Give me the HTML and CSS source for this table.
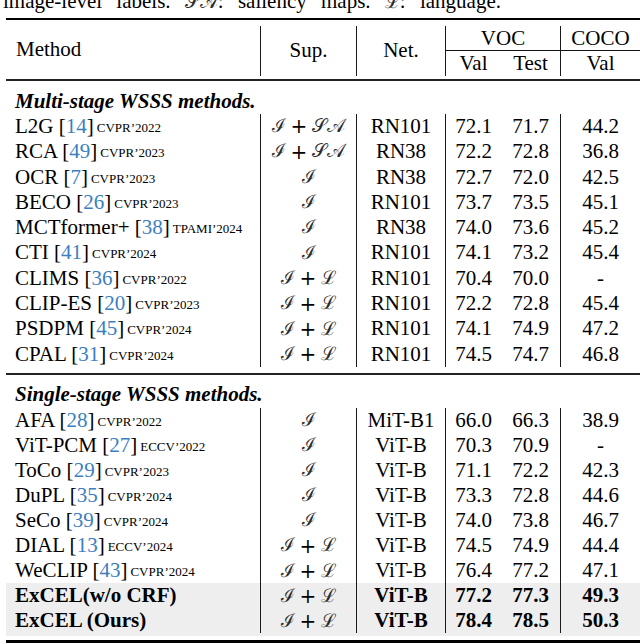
FILE: index.html
```html
<!DOCTYPE html>
<html>
<head>
<meta charset="utf-8">
<link rel="stylesheet" href="styles.css">
</head>
<body>
<div class="page">
  <div class="caption"><p>image-level labels. <span class="m">𝒮𝒜</span>: saliency maps. <span class="m">ℒ</span>: language.</p></div>
  <div class="tbl">
    <div class="rule heavy"></div>
    <div class="gap g-top"></div>
    <div class="head">
      <div class="h h-method">Method</div>
      <div class="h h-sup vl">Sup.</div>
      <div class="h h-net vl">Net.</div>
      <div class="h h-voc vl cm">VOC</div>
      <div class="h h-coco vl cm">COCO</div>
      <div class="h h-val vl">Val</div>
      <div class="h h-test">Test</div>
      <div class="h h-cval vl">Val</div>
    </div>
    <div class="gap g-headbot"></div>
    <div class="rule mid"></div>
    <div class="gap g-sec1"></div>
    <div class="section">Multi-stage WSSS methods.</div>

    <div class="row"><div class="c c1">L2G [<span class="cite">14</span>] <span class="ven">CVPR’2022</span></div><div class="c vl"><span class="m">ℐ</span><span class="plus">+</span><span class="m">𝒮𝒜</span></div><div class="c vl">RN101</div><div class="c vl">72.1</div><div class="c">71.7</div><div class="c vl">44.2</div></div>
    <div class="row"><div class="c c1">RCA [<span class="cite">49</span>] <span class="ven">CVPR’2023</span></div><div class="c vl"><span class="m">ℐ</span><span class="plus">+</span><span class="m">𝒮𝒜</span></div><div class="c vl">RN38</div><div class="c vl">72.2</div><div class="c">72.8</div><div class="c vl">36.8</div></div>
    <div class="row"><div class="c c1">OCR [<span class="cite">7</span>] <span class="ven">CVPR’2023</span></div><div class="c vl"><span class="m">ℐ</span></div><div class="c vl">RN38</div><div class="c vl">72.7</div><div class="c">72.0</div><div class="c vl">42.5</div></div>
    <div class="row"><div class="c c1">BECO [<span class="cite">26</span>] <span class="ven">CVPR’2023</span></div><div class="c vl"><span class="m">ℐ</span></div><div class="c vl">RN101</div><div class="c vl">73.7</div><div class="c">73.5</div><div class="c vl">45.1</div></div>
    <div class="row"><div class="c c1">MCTformer+ [<span class="cite">38</span>] <span class="ven">TPAMI’2024</span></div><div class="c vl"><span class="m">ℐ</span></div><div class="c vl">RN38</div><div class="c vl">74.0</div><div class="c">73.6</div><div class="c vl">45.2</div></div>
    <div class="row"><div class="c c1">CTI [<span class="cite">41</span>] <span class="ven">CVPR’2024</span></div><div class="c vl"><span class="m">ℐ</span></div><div class="c vl">RN101</div><div class="c vl">74.1</div><div class="c">73.2</div><div class="c vl">45.4</div></div>
    <div class="row"><div class="c c1">CLIMS [<span class="cite">36</span>] <span class="ven">CVPR’2022</span></div><div class="c vl"><span class="m">ℐ</span><span class="plus">+</span><span class="m">ℒ</span></div><div class="c vl">RN101</div><div class="c vl">70.4</div><div class="c">70.0</div><div class="c vl">-</div></div>
    <div class="row"><div class="c c1">CLIP-ES [<span class="cite">20</span>] <span class="ven">CVPR’2023</span></div><div class="c vl"><span class="m">ℐ</span><span class="plus">+</span><span class="m">ℒ</span></div><div class="c vl">RN101</div><div class="c vl">72.2</div><div class="c">72.8</div><div class="c vl">45.4</div></div>
    <div class="row"><div class="c c1">PSDPM [<span class="cite">45</span>] <span class="ven">CVPR’2024</span></div><div class="c vl"><span class="m">ℐ</span><span class="plus">+</span><span class="m">ℒ</span></div><div class="c vl">RN101</div><div class="c vl">74.1</div><div class="c">74.9</div><div class="c vl">47.2</div></div>
    <div class="row"><div class="c c1">CPAL [<span class="cite">31</span>] <span class="ven">CVPR’2024</span></div><div class="c vl"><span class="m">ℐ</span><span class="plus">+</span><span class="m">ℒ</span></div><div class="c vl">RN101</div><div class="c vl">74.5</div><div class="c">74.7</div><div class="c vl">46.8</div></div>

    <div class="gap g-sec-end"></div>
    <div class="rule mid"></div>
    <div class="gap g-sec2"></div>
    <div class="section">Single-stage WSSS methods.</div>

    <div class="row r2"><div class="c c1">AFA [<span class="cite">28</span>] <span class="ven">CVPR’2022</span></div><div class="c vl"><span class="m">ℐ</span></div><div class="c vl">MiT-B1</div><div class="c vl">66.0</div><div class="c">66.3</div><div class="c vl">38.9</div></div>
    <div class="row r2"><div class="c c1">ViT-PCM [<span class="cite">27</span>] <span class="ven">ECCV’2022</span></div><div class="c vl"><span class="m">ℐ</span></div><div class="c vl">ViT-B</div><div class="c vl">70.3</div><div class="c">70.9</div><div class="c vl">-</div></div>
    <div class="row r2"><div class="c c1">ToCo [<span class="cite">29</span>] <span class="ven">CVPR’2023</span></div><div class="c vl"><span class="m">ℐ</span></div><div class="c vl">ViT-B</div><div class="c vl">71.1</div><div class="c">72.2</div><div class="c vl">42.3</div></div>
    <div class="row r2"><div class="c c1">DuPL [<span class="cite">35</span>] <span class="ven">CVPR’2024</span></div><div class="c vl"><span class="m">ℐ</span></div><div class="c vl">ViT-B</div><div class="c vl">73.3</div><div class="c">72.8</div><div class="c vl">44.6</div></div>
    <div class="row r2"><div class="c c1">SeCo [<span class="cite">39</span>] <span class="ven">CVPR’2024</span></div><div class="c vl"><span class="m">ℐ</span></div><div class="c vl">ViT-B</div><div class="c vl">74.0</div><div class="c">73.8</div><div class="c vl">46.7</div></div>
    <div class="row r2"><div class="c c1">DIAL [<span class="cite">13</span>] <span class="ven">ECCV’2024</span></div><div class="c vl"><span class="m">ℐ</span><span class="plus">+</span><span class="m">ℒ</span></div><div class="c vl">ViT-B</div><div class="c vl">74.5</div><div class="c">74.9</div><div class="c vl">44.4</div></div>
    <div class="row r2"><div class="c c1">WeCLIP [<span class="cite">43</span>] <span class="ven">CVPR’2024</span></div><div class="c vl"><span class="m">ℐ</span><span class="plus">+</span><span class="m">ℒ</span></div><div class="c vl">ViT-B</div><div class="c vl">76.4</div><div class="c">77.2</div><div class="c vl">47.1</div></div>
    <div class="row r2 ours"><div class="c c1 b">ExCEL(w/o CRF)</div><div class="c vl"><span class="m">ℐ</span><span class="plus">+</span><span class="m">ℒ</span></div><div class="c vl b">ViT-B</div><div class="c vl b">77.2</div><div class="c b">77.3</div><div class="c vl b">49.3</div></div>
    <div class="row r2 ours"><div class="c c1 b">ExCEL (Ours)</div><div class="c vl"><span class="m">ℐ</span><span class="plus">+</span><span class="m">ℒ</span></div><div class="c vl b">ViT-B</div><div class="c vl b">78.4</div><div class="c b">78.5</div><div class="c vl b">50.3</div></div>
    <div class="ours-tail"></div>
    <div class="gap g-bot"></div>
    <div class="rule heavy bottom"></div>
  </div>
</div>
</body>
</html>
```

FILE: styles.css
```css
html, body {
  margin: 0;
  padding: 0;
  background: #ffffff;
}

body {
  font-family: "Liberation Serif", "Times New Roman", serif;
  color: #000;
  font-size: 21px;
}

.page {
  width: 640px;
  height: 644px;
  overflow: hidden;
}

.caption {
  display: flow-root;
  height: 18px;
}

.caption p {
  margin: -9px 0 0 3px;
  line-height: 21px;
  font-size: 21px;
  white-space: nowrap;
  word-spacing: 9px;
}

.m {
  font-family: "Liberation Serif", serif;
  font-style: normal;
  font-weight: normal;
  font-size: 18.5px;
  word-spacing: 0;
  color: #2b2b2b;
}

.plus {
  font-family: "DejaVu Serif", serif;
  font-weight: normal;
  font-size: 20px;
  margin: 0 5px;
}

.tbl {
  margin-left: 6px;
  width: 634px;
}

.rule { background: #000; }
.rule.heavy { height: 2px; }
.rule.mid { height: 2px; background: #222; }
.rule.bottom { height: 3px; }

.g-top { height: 6px; }
.g-headbot { height: 3px; }
.g-sec1 { height: 7.5px; }
.g-sec-end { height: 6.2px; }
.g-sec2 { height: 7.4px; }
.g-bot { height: 4px; }

.head {
  display: grid;
  grid-template-columns: 254px 96px 89px 56px 59px 80px;
  grid-template-rows: 25px 25px;
}

.h {
  display: flex;
  align-items: center;
  justify-content: center;
  line-height: 1;
}

.h-method { grid-column: 1; grid-row: 1 / span 2; justify-content: flex-start; padding-left: 10px; padding-bottom: 4px; }
.h-sup { grid-column: 2; grid-row: 1 / span 2; padding-bottom: 2px; }
.h-net { grid-column: 3; grid-row: 1 / span 2; padding-bottom: 2px; }
.h-voc { grid-column: 4 / span 2; grid-row: 1; padding-top: 1px; }
.h-coco { grid-column: 6; grid-row: 1; padding-top: 1px; }
.h-val { grid-column: 4; grid-row: 2; }
.h-test { grid-column: 5; grid-row: 2; }
.h-cval { grid-column: 6; grid-row: 2; }

.cm { border-bottom: 1px solid #111; }

.vl { border-left: 1px solid #1a1a1a; }

.section {
  height: 25.3px;
  display: flex;
  align-items: center;
  padding-left: 9px;
  font-weight: bold;
  font-style: italic;
}

.row {
  display: grid;
  grid-template-columns: 254px 96px 89px 56px 59px 80px;
  height: 25.3px;
}

.row.r2 { height: 25.1px; }

.c {
  display: flex;
  align-items: center;
  justify-content: center;
  white-space: nowrap;
  line-height: 1;
}

.c1 {
  justify-content: flex-start;
  padding-left: 9px;
}

.cite { color: #3b7fc1; }

.ven {
  font-size: 13px;
  margin-left: 3px;
  position: relative;
  top: 1px;
}

.b { font-weight: bold; }

.ours { background: #eeeeee; }

.ours-tail {
  height: 3px;
  background: #eeeeee;
}
```
